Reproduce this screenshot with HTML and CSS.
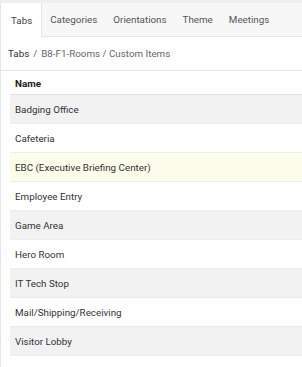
FILE: index.html
```html
<!DOCTYPE html>
<html>
<head>
<meta charset="utf-8">
<link rel="stylesheet" href="styles.css">
</head>
<body>
<div class="page">
  <nav class="tabbar">
    <div class="tab active">Tabs</div>
    <div class="tab">Categories</div>
    <div class="tab">Orientations</div>
    <div class="tab">Theme</div>
    <div class="tab">Meetings</div>
  </nav>
  <div class="crumbs"><span class="crumb-root">Tabs</span><span class="sep">/</span><span>B8-F1-Rooms / Custom Items</span></div>
  <div class="content">
    <div class="table">
      <div class="row head">Name</div>
      <div class="row odd">Badging Office</div>
      <div class="row">Cafeteria</div>
      <div class="row hover">EBC (Executive Briefing Center)</div>
      <div class="row">Employee Entry</div>
      <div class="row odd">Game Area</div>
      <div class="row">Hero Room</div>
      <div class="row odd">IT Tech Stop</div>
      <div class="row">Mail/Shipping/Receiving</div>
      <div class="row odd">Visitor Lobby</div>
    </div>
  </div>
</div>
</body>
</html>
```
FILE: styles.css
```css
html, body {
  margin: 0;
  padding: 0;
  background: #ffffff;
}
body {
  font-family: Roboto, "Liberation Sans", sans-serif;
  font-size: 9.8px;
  color: #333333;
  border-top: 3px solid #eceff3;
}
.page {
  border-left: 1px solid #e4e6ea;
  height: 364px;
  box-sizing: border-box;
}
.tabbar {
  display: flex;
  height: 34px;
  box-sizing: border-box;
  background: #f7f7f7;
  border-bottom: 1px solid #e6e6e6;
}
.tab {
  display: flex;
  align-items: center;
  padding: 0 8px;
  color: #555555;
}
.tab.active {
  background: #ffffff;
  color: #444444;
  padding: 0 9px 0 10px;
  border-right: 1px solid #e6e6e6;
  margin-bottom: -1px;
}
.crumbs {
  height: 34px;
  box-sizing: border-box;
  display: flex;
  align-items: center;
  padding-left: 7px;
  color: #666666;
  border-bottom: 1px solid #e6e6e6;
}
.crumb-root {
  color: #333333;
}
.sep {
  margin: 0 4px;
}
.content {
  padding-left: 9px;
}
.table {
  display: flex;
  flex-direction: column;
}
.row {
  height: 29px;
  box-sizing: border-box;
  display: flex;
  align-items: center;
  padding: 1px 0 0 5px;
  border-bottom: 1px solid #ececec;
  color: #333333;
}
.row.head {
  height: 24px;
  font-weight: bold;
  color: #222222;
  border-bottom: 1px solid #e2e2e2;
}
.row.odd {
  background: #f2f2f2;
}
.row.hover {
  background: #fcfcea;
}
```
